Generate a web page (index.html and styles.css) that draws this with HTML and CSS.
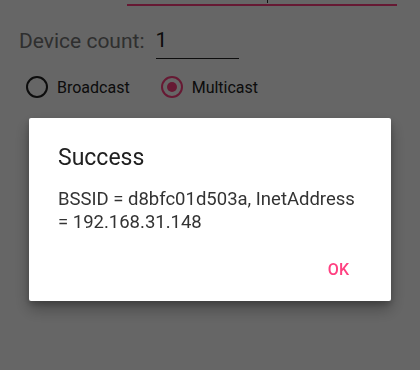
FILE: index.html
```html
<!DOCTYPE html>
<html>
<head>
<meta charset="utf-8">
<link rel="stylesheet" href="styles.css">
</head>
<body>
<div class="screen">
  <div class="top-field"><span class="descender"></span></div>
  <div class="count-row">
    <span class="count-label">Device count:</span>
    <span class="count-input">1</span>
  </div>
  <div class="radio-row">
    <label class="radio"><span class="radio-circle"></span><span class="radio-text">Broadcast</span></label>
    <label class="radio checked"><span class="radio-circle"><span class="radio-dot"></span></span><span class="radio-text">Multicast</span></label>
  </div>
</div>
<div class="scrim">
  <div class="dialog">
    <div class="dialog-title">Success</div>
    <div class="dialog-body">BSSID = d8bfc01d503a, InetAddress = 192.168.31.148</div>
    <div class="dialog-actions"><span class="dialog-button">OK</span></div>
  </div>
</div>
</body>
</html>
```
FILE: styles.css
```css
html, body {
  margin: 0;
  padding: 0;
  background: #ffffff;
  font-family: Roboto, "Noto Sans", sans-serif;
  width: 420px;
  height: 370px;
  overflow: hidden;
}
.screen {
  display: flex;
  flex-direction: column;
}
.top-field {
  margin-left: 127px;
  width: 270px;
  height: 4px;
  border-bottom: 2px solid #ff4081;
  position: relative;
}
.descender {
  position: absolute;
  left: 140px;
  top: 0;
  width: 1px;
  height: 3px;
  background: #333;
}
.count-row {
  display: flex;
  align-items: flex-end;
  margin-top: 21px;
  padding-left: 19px;
  height: 32px;
}
.count-label {
  font-size: 21px;
  color: #757575;
  line-height: 25px;
  padding-bottom: 5px;
}
.count-input {
  margin-left: 11px;
  width: 83px;
  font-size: 21px;
  color: #212121;
  line-height: 25px;
  padding-bottom: 5px;
  border-bottom: 1px solid #212121;
  box-sizing: border-box;
}
.radio-row {
  display: flex;
  align-items: center;
  padding-left: 26px;
  margin-top: 16px;
  height: 24px;
}
.radio {
  display: flex;
  align-items: center;
  margin-right: 31px;
}
.radio-circle {
  width: 22px;
  height: 22px;
  box-sizing: border-box;
  border: 2px solid #212121;
  border-radius: 50%;
  display: flex;
  align-items: center;
  justify-content: center;
}
.radio.checked .radio-circle {
  border-color: #ff4081;
}
.radio-dot {
  width: 10px;
  height: 10px;
  border-radius: 50%;
  background: #ff4081;
}
.radio-text {
  margin-left: 9px;
  font-size: 16px;
  color: #212121;
}
.scrim {
  position: fixed;
  inset: 0;
  background: rgba(0, 0, 0, 0.6);
  display: flex;
  flex-direction: column;
  align-items: center;
  padding-top: 118px;
}
.dialog {
  width: 362px;
  height: 183px;
  background: #ffffff;
  border-radius: 2px;
  box-shadow: 0 8px 16px rgba(0, 0, 0, 0.3), 0 3px 6px rgba(0, 0, 0, 0.2);
  box-sizing: border-box;
  padding: 26px 29px 0 29px;
  display: flex;
  flex-direction: column;
}
.dialog-title {
  font-size: 23px;
  font-weight: 400;
  color: #212121;
  line-height: 28px;
}
.dialog-body {
  margin-top: 16px;
  margin-right: 4px;
  font-size: 18.5px;
  line-height: 23px;
  color: #333333;
}
.dialog-actions {
  display: flex;
  justify-content: flex-end;
  margin-top: 26px;
  padding-right: 5px;
}
.dialog-button {
  font-size: 16px;
  font-weight: 500;
  color: #ff4081;
  padding: 0 8px;
}
```
